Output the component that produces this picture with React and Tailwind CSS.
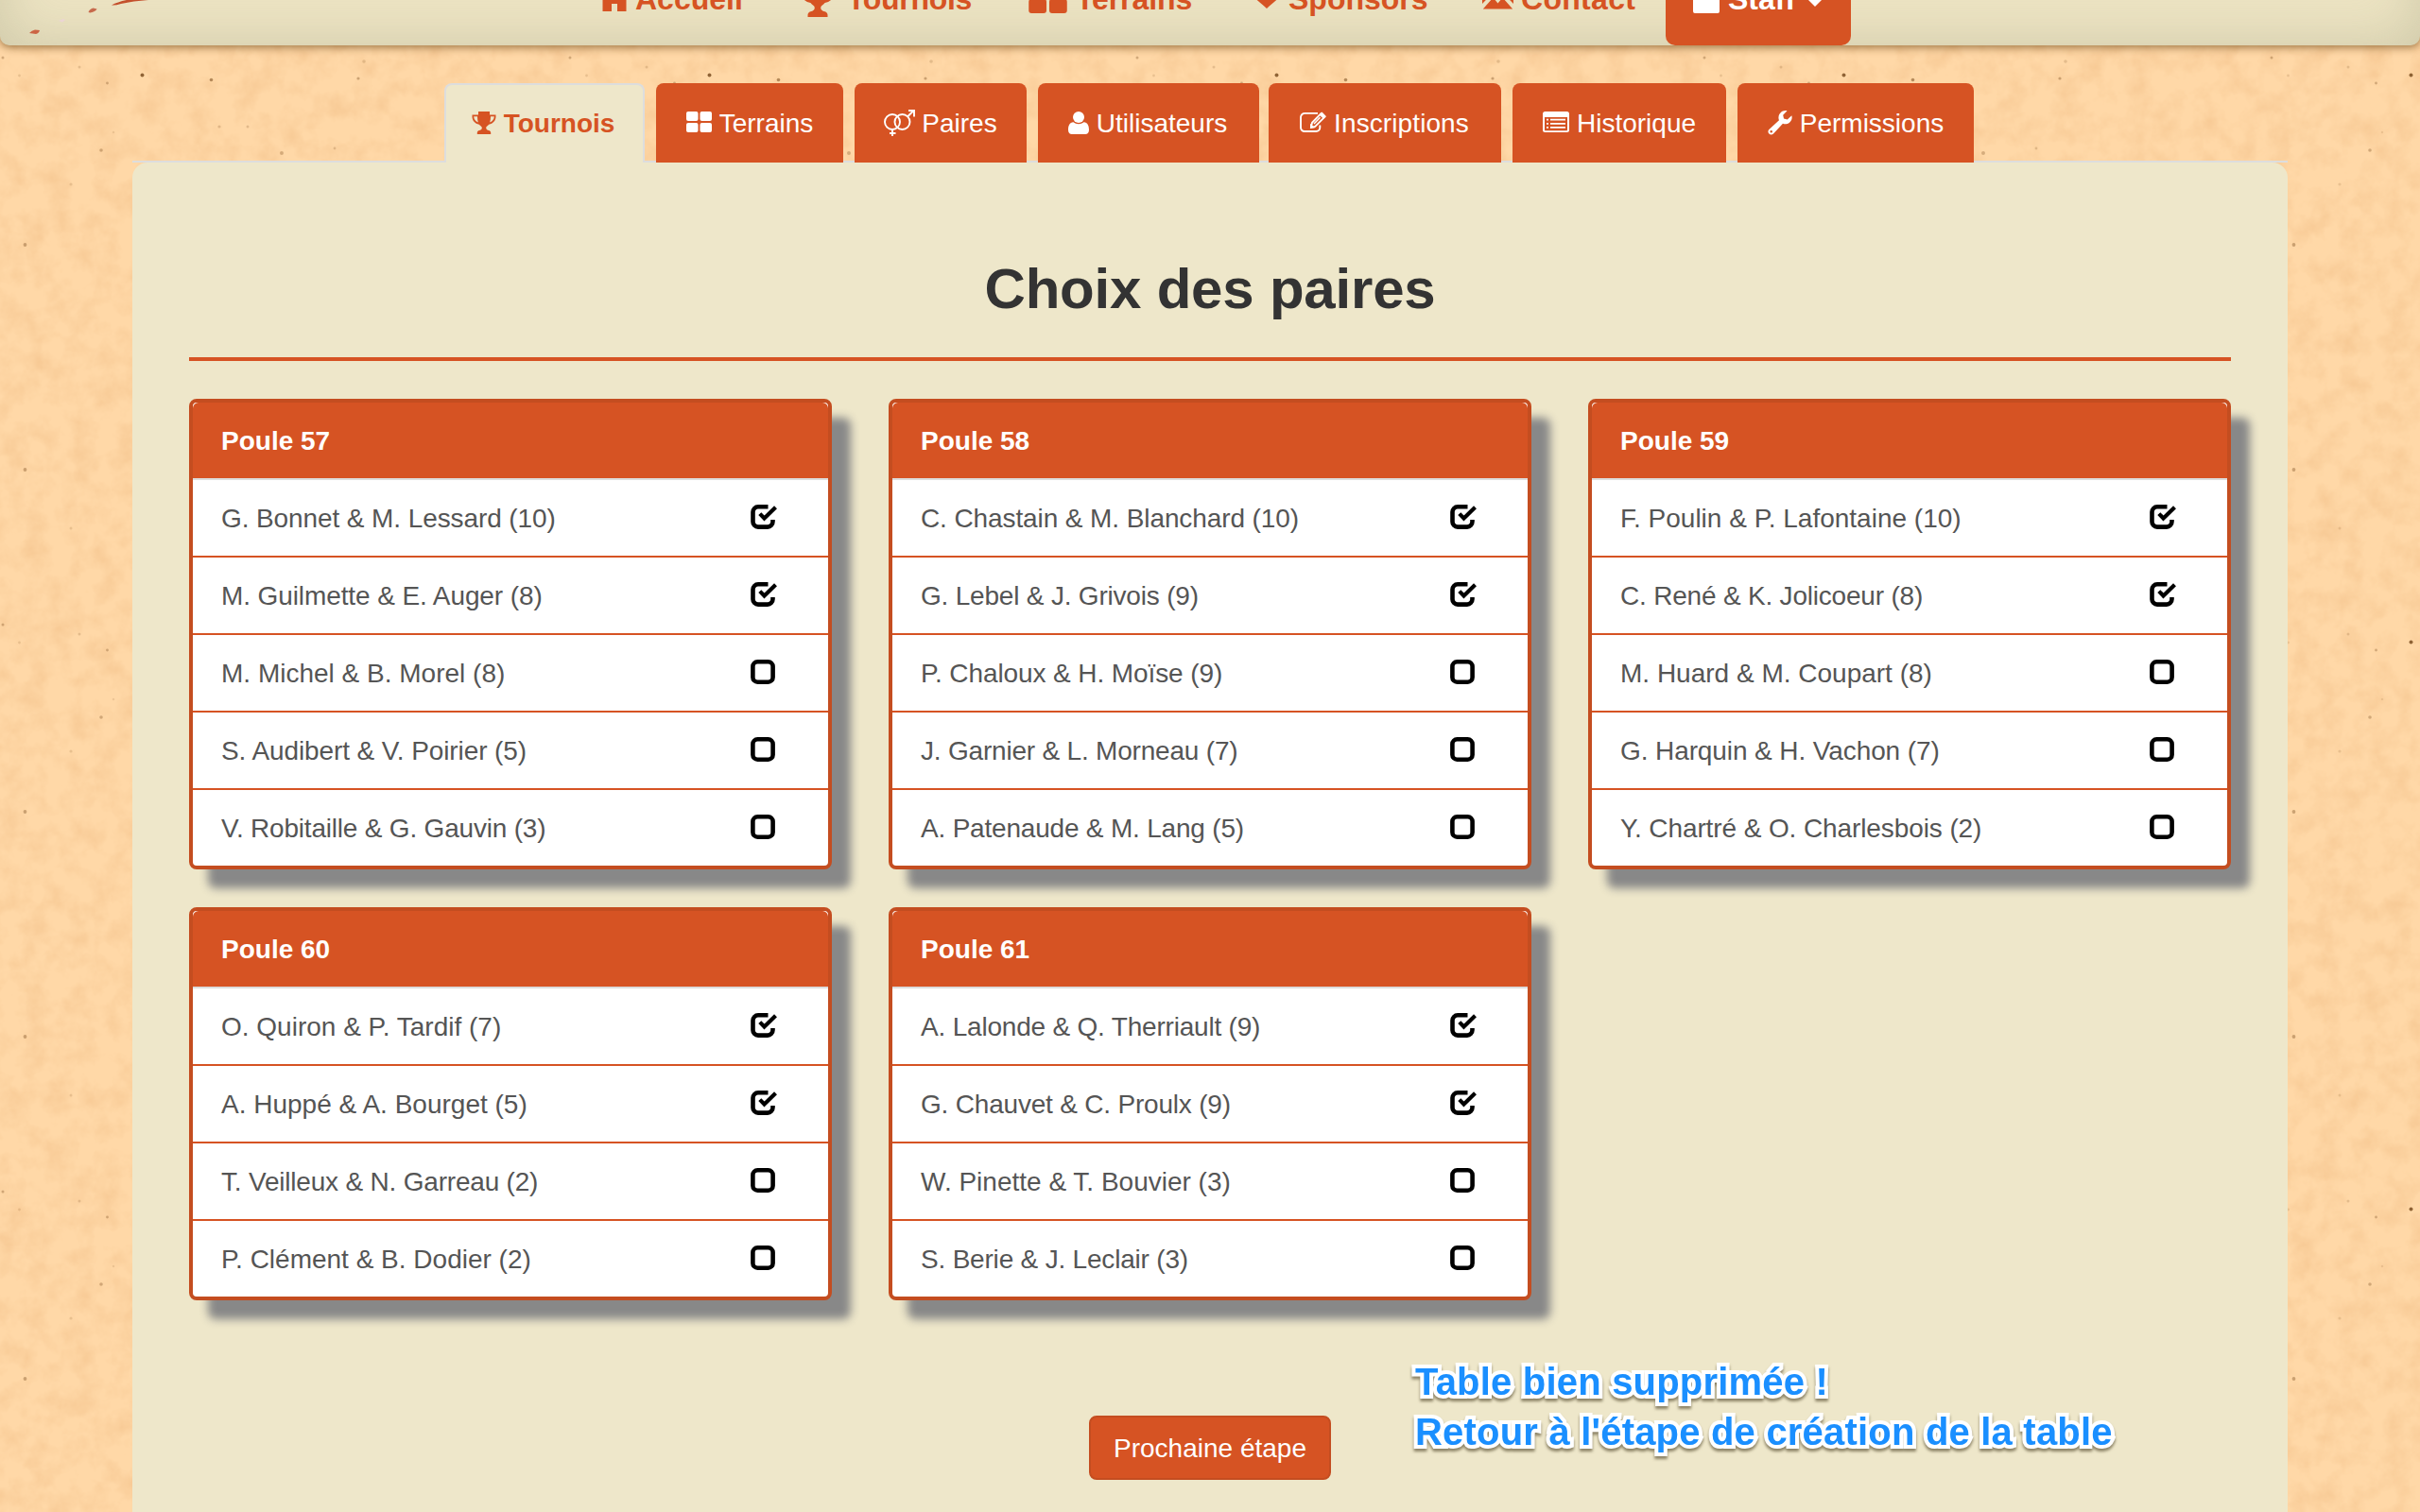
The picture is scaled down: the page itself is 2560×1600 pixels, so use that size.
const T0 = "tracking-normal";
const T1 = "tracking-[-0.1px]";
const T2 = "tracking-[-0.2px]";

const CARDS = [
  { name: "Poule 57", rows: [["G. Bonnet & M. Lessard (10)", true, T1], ["M. Guilmette & E. Auger (8)", true, T1], ["M. Michel & B. Morel (8)", false, T0], ["S. Audibert & V. Poirier (5)", false, T1], ["V. Robitaille & G. Gauvin (3)", false, T2]] },
  { name: "Poule 58", rows: [["C. Chastain & M. Blanchard (10)", true, T1], ["G. Lebel & J. Grivois (9)", true, T2], ["P. Chaloux & H. Moïse (9)", false, T1], ["J. Garnier & L. Morneau (7)", false, T2], ["A. Patenaude & M. Lang (5)", false, T2]] },
  { name: "Poule 59", rows: [["F. Poulin & P. Lafontaine (10)", true, T0], ["C. René & K. Jolicoeur (8)", true, T2], ["M. Huard & M. Coupart (8)", false, T0], ["G. Harquin & H. Vachon (7)", false, T1], ["Y. Chartré & O. Charlesbois (2)", false, T1]] },
  { name: "Poule 60", rows: [["O. Quiron & P. Tardif (7)", true, T0], ["A. Huppé & A. Bourget (5)", true, T0], ["T. Veilleux & N. Garreau (2)", false, T2], ["P. Clément & B. Dodier (2)", false, T0]] },
  { name: "Poule 61", rows: [["A. Lalonde & Q. Therriault (9)", true, T2], ["G. Chauvet & C. Proulx (9)", true, T2], ["W. Pinette & T. Bouvier (3)", false, T0], ["S. Berie & J. Leclair (3)", false, T2]] },
];

const Trophy = ({ className }) => (
  <svg viewBox="0 0 26 24" className={className} fill="currentColor">
    <path d="M7 0h12v3.5h6.5v2c0 4-3 7.500-7.300 8.200-1 1.300-2.300 2-2.700 2.600-.8 1.700.2 3.200 2.700 3.700 1.300.4 2 1.300 2 2.500V24H5.800v-1.500c0-1.200.7-2.100 2-2.500 2.500-.5 3.500-2 2.700-3.700-.4-.6-1.700-1.300-2.700-2.600C3.500 13 .5 9.500.5 5.500v-2H7zM2.200 5.300c0 2.900 1.900 5.300 4.600 6.200C6.200 9.700 6 7.500 6 5.300zm21.600 0H20c0 2.200-.2 4.400-.8 6.200 2.700-.9 4.600-3.300 4.600-6.200z" />
  </svg>
);
const Grid4 = ({ className }) => (
  <svg viewBox="0 0 27 22" className={className} fill="currentColor">
    <rect width="12.500" height="10" rx="2" />
    <rect x="14.500" width="12.500" height="10" rx="2" />
    <rect y="12" width="12.500" height="10" rx="2" />
    <rect x="14.500" y="12" width="12.500" height="10" rx="2" />
  </svg>
);
const Genders = ({ className }) => (
  <svg viewBox="0 0 33 28" className={className} fill="none" stroke="currentColor" strokeWidth="1.900">
    <circle cx="9" cy="13" r="8" />
    <circle cx="19.500" cy="13" r="8" />
    <path d="M9 21v7M6 25h6.500M25 7.500L31 1.500M26 1h6v6.500" />
  </svg>
);
const User = ({ className }) => (
  <svg viewBox="0 0 22 24" className={className} fill="currentColor">
    <circle cx="11" cy="6" r="6" />
    <path d="M5.500 11.200c1.500 1.300 3.400 2 5.500 2s4-.7 5.500-2C20.500 11.200 22 15 22 19.500c0 3-1.700 4.500-4 4.500H4c-2.300 0-4-1.500-4-4.500 0-4.500 1.500-8.300 5.500-8.300z" />
  </svg>
);
const Edit = ({ className }) => (
  <svg viewBox="0 0 28 24" className={className} fill="none" stroke="currentColor">
    <path d="M19 1.900H5.500A4.300 4.300 0 0 0 1 6v11a4 4 0 0 0 4.300 4h12a4 4 0 0 0 4-4v-2.500" strokeWidth="1.900" />
    <path d="M12 16.800l1-5L22.500 2l4 3.600-10.300 10.400z" strokeWidth="1.800" />
    <path d="M20.500 3.500l4.500 4.200L27.800 5 23.500 0.500zM11 17.800v-5l5 4.500z" fill="currentColor" stroke="none" />
    <path d="M15 13l6.500-6.700" strokeWidth="1.500" />
  </svg>
);
const ListAlt = ({ className }) => (
  <svg viewBox="0 0 28 22" className={className} fill="currentColor">
    <path fillRule="evenodd" d="M2.500 0h23A2.500 2.500 0 0 1 28 2.500v17a2.500 2.500 0 0 1-2.500 2.500h-23A2.500 2.500 0 0 1 0 19.500v-17A2.500 2.500 0 0 1 2.500 0zM2 6v13.500q0 .7.700.7h22.600q.7 0 .7-.7V6z" />
    <path d="M4 7.800h2v1.800H4zM8 7.800h16v1.800H8zM4 12h2v1.800H4zM8 12h16v1.800H8zM4 16h2v1.800H4zM8 16h16v1.800H8z" />
  </svg>
);
const Wrench = ({ className }) => (
  <svg viewBox="0 0 26 26" className={className} fill="currentColor">
    <path fillRule="evenodd" d="M20.500.3l-4.300 4.500.8 3.800 3.800.9 4.500-4.300c1.300 4-1.400 8.600-5.800 9-1.300.1-2.500-.1-3.500-.5L6 24.600c-1.300 1.300-3.300 1.300-4.600 0s-1.300-3.300 0-4.600L12 10.200c-.5-1-.7-2.200-.5-3.500C12 2.300 16.300-.9 20.500.3zM3.700 21a1.300 1.300 0 1 0 0 2.600 1.300 1.300 0 0 0 0-2.600z" />
  </svg>
);
const Home = ({ className }) => (
  <svg viewBox="0 0 36 30" className={className} fill="currentColor">
    <path d="M18 0L36 17h-5.500v13h-9.500V22h-6v8h-9.500V17H0z" />
  </svg>
);
const Heart = ({ className }) => (
  <svg viewBox="0 0 32 28" className={className} fill="currentColor">
    <path d="M16 28C10 22 0 16.500 0 8.500 0 3.500 3.500 0 8 0c3.500 0 6.500 2 8 5 1.500-3 4.500-5 8-5 4.500 0 8 3.500 8 8.500C32 16.500 22 22 16 28z" />
  </svg>
);
const Envelope = ({ className }) => (
  <svg viewBox="0 0 33 26" className={className} fill="currentColor">
    <path d="M0 0h33L16.500 15.500zM0 3v17l8.700-9zM33 3v17l-8.700-9zM.8 25.500L11.500 13.500l5 6 5-6 10.700 12z" />
  </svg>
);
const Folder = ({ className }) => (
  <svg viewBox="0 0 28 30" className={className} fill="currentColor">
    <path d="M0 8h28v20a2 2 0 0 1-2 2H2a2 2 0 0 1-2-2zM2 2h9l3 4H2z" />
  </svg>
);

const Check = ({ on }) => (
  <svg viewBox="0 0 28 26" className="mt-[-4px] mr-[24px] h-[26px] w-[28px] shrink-0" fill="none">
    {on ? (
      <>
        <path d="M18.500 2.300H8A5.500 5.500 0 0 0 2.500 8v10A5.500 5.500 0 0 0 8 23.600h10a5.500 5.500 0 0 0 5.500-5.500v-2" stroke="#000" strokeWidth="4.600" />
        <path d="M10.300 10.300l4.200 4.700L26 3" stroke="#fff" strokeWidth="6.500" />
        <path d="M9.800 9.600l4.700 4.900L26.500 2.800" stroke="#000" strokeWidth="4.200" />
      </>
    ) : (
      <rect x="2.400" y="2.300" width="21.200" height="21.400" rx="5" stroke="#000" strokeWidth="4.600" />
    )}
  </svg>
);

const TABS = [
  { label: "Terrains", w: "w-[198px]", Icon: Grid4, ic: "w-[27px] h-[22px] mr-[8px] mt-[-3px]" },
  { label: "Paires", w: "w-[182px]", Icon: Genders, ic: "w-[33px] h-[28px] mr-[7px] mt-[-1px]" },
  { label: "Utilisateurs", w: "w-[234px] pr-[2px]", Icon: User, ic: "w-[22px] h-[24px] mr-[8px] mt-[-1px]" },
  { label: "Inscriptions", w: "w-[246px] -ml-[2px] pr-[1px] tracking-[0.1px]", Icon: Edit, ic: "w-[28px] h-[24px] mr-[8px] mt-[-1px]" },
  { label: "Historique", w: "w-[226px]", Icon: ListAlt, ic: "w-[28px] h-[22px] mr-[8px] mt-[-3px]" },
  { label: "Permissions", w: "w-[250px]", Icon: Wrench, ic: "w-[26px] h-[26px] mr-[8px] mt-[-1px]" },
];

const NAV = [
  { label: "Accueil", w: "w-[214px]", Icon: Home, ic: "mr-[4px] mb-[4px] h-[30px] w-[36px]" },
  { label: "Tournois", w: "w-[242px] tracking-[-0.3px]", Icon: Trophy, ic: "mr-[12px] mt-[2px] h-[35px] w-[38px]" },
  { label: "Terrains", w: "w-[236px] tracking-[-0.1px]", Icon: Grid4, ic: "mr-[9px] mb-[3px] h-[33px] w-[41px]" },
  { label: "Sponsors", w: "w-[244px]", Icon: Heart, ic: "mr-[7px] mb-[8px] h-[28px] w-[32px]" },
  { label: "Contact", w: "w-[194px] tracking-[0.3px]", Icon: Envelope, ic: "mr-[8px] mb-[4px] h-[26px] w-[33px]" },
];

const SPECKS = [
  [3, 61, 1.5, 0.3], [150.5, 79.500, 2, 0.75], [113.5, 88, 1.400, 0.3], [223.5, 84.500, 1.800, 0.5],
  [379, 83, 1.600, 0.35], [385, 65, 1.800, 0.18], [20.500, 80, 1.400, 0.15], [232, 134, 1.600, 0.2],
  [262, 134, 1.500, 0.2], [107, 159, 1.800, 0.3], [298, 162, 2, 0.28], [354, 157, 1.400, 0.2],
  [75, 195, 1.600, 0.15], [26.500, 259, 1.900, 0.35], [26.500, 497, 1.900, 0.35], [75, 559, 1.500, 0.15],
  [84, 71, 1.500, 0.18], [120, 140, 1.300, 0.12],
];

const Paper = () => (
  <svg className="absolute inset-0 h-[1600px] w-[2560px]">
    <defs>
      <filter id="grain" x="0" y="0" width="100%" height="100%" colorInterpolationFilters="sRGB">
        <feTurbulence type="fractalNoise" baseFrequency="0.04" numOctaves="4" seed="4" />
        <feColorMatrix values="0 0 0 0 0.92  0 0 0 0 0.70  0 0 0 0 0.47  0.700 0 0 0 -0.270" />
      </filter>
      <pattern id="specks" width="600" height="600" patternUnits="userSpaceOnUse">
        {SPECKS.map(([x, y, r, o], i) => (
          <circle key={i} cx={x} cy={y} r={r} fill="#6b3d10" opacity={o} />
        ))}
      </pattern>
    </defs>
    <rect width="2560" height="1600" filter="url(#grain)" />
    <rect width="2560" height="1600" fill="url(#specks)" />
  </svg>
);

const Card = ({ card }) => (
  <section className="w-[680px] self-start overflow-hidden rounded-[8px] border-4 border-[#c44d20] bg-white shadow-[20px_20px_10px_#888]">
    <h3 className="flex h-[82px] items-center rounded-t-[6px] border-b-2 border-[#ddd] bg-[#d65323] px-[30px] pt-[2px] text-[28px] font-bold text-white">{card.name}</h3>
    <ul className="divide-y-2 divide-[#d65323]">
      {card.rows.map(([names, on, tracking]) => (
        <li key={names} className="flex h-[82px] items-center justify-between px-[30px] pt-[2px] text-[28px] text-[#555] last:h-[80px]">
          <span className={tracking}>{names}</span>
          <Check on={on} />
        </li>
      ))}
    </ul>
  </section>
);

export default function App() {
  return (
    <div className="relative h-[1600px] w-[2560px] overflow-hidden bg-[#ffd8a7] font-['Liberation_Sans',Arial,sans-serif]">
      <Paper />
      <div className="relative flex flex-col items-center">
        <header className="-mt-[100px] flex h-[148px] w-full items-end rounded-b-[10px] bg-[#ede4c3] pl-[632px] text-[32px] font-bold text-[#d65323] shadow-[inset_0_0_60px_rgba(150,150,120,0.36),0_2px_10px_rgba(100,60,10,0.65)]">
          {NAV.map(({ label, w, Icon, ic }) => (
            <a key={label} className={`flex h-[98px] items-center ${w}`}><Icon className={ic} />{label}</a>
          ))}
          <a className="flex h-[98px] w-[196px] items-center rounded-b-[10px] bg-[#d65323] pl-[29px] text-white">
            <Folder className="mr-[9px] h-[30px] w-[28px]" />Staff
            <svg viewBox="0 0 18 9" className="mt-[6px] ml-[12px] h-[9px] w-[18px]" fill="currentColor"><path d="M0 0h18L9 9z" /></svg>
          </a>
        </header>
        <svg viewBox="0 0 160 40" className="absolute top-0 left-0 h-[40px] w-[160px]">
          <path d="M118 5.500Q124 2 134 0H157Q141 1 128 4Q122 6 118 5.500z" fill="#c4502c" />
          <path d="M93.500 13q1-3.500 5-4.500l4 1q-1 2.500-7 4z" fill="#c76a4c" />
          <path d="M62 22l5-2 2 1-3 2.500z" fill="#ecd5d4" />
          <path d="M31 35q2.500-3 6-3.500l5 .5q-1 3.500-4 4z" fill="#cc6444" />
        </svg>
        <nav className="mt-[40px] mr-[2px] flex h-[84px] gap-[12px] text-[28px] text-white">
          <a className="flex w-[212px] items-center justify-center rounded-t-[8px] border-2 border-b-0 border-[#ddd] bg-[#eee7ca] pr-[3px] font-bold text-[#d65323]"><Trophy className="mt-[-2px] mr-[8px] h-[24px] w-[26px]" />Tournois</a>
          {TABS.map(({ label, w, Icon, ic }) => (
            <a key={label} className={`z-10 flex items-center justify-center rounded-t-[8px] bg-[#d65323] pt-[1px] ${w}`}><Icon className={ic} />{label}</a>
          ))}
        </nav>
        <div className="-mt-[2px] flex h-[2px] w-[2280px]">
          <div className="w-[330px] bg-[#ddd]" />
          <div className="w-[212px]" />
          <div className="grow bg-[#ddd]" />
        </div>
        <main className="flex h-[1500px] w-[2280px] flex-col items-center rounded-t-[16px] bg-[#eee7ca] px-[60px]">
          <h1 className="mb-[40px] flex h-[210px] w-full items-center justify-center border-b-4 border-[#d65323] pt-[62px] text-[60px] font-bold tracking-[-0.2px] text-[#333]">Choix des paires</h1>
          <div className="grid w-full grid-cols-3 gap-x-[60px] gap-y-[40px]">{CARDS.map((c) => <Card key={c.name} card={c} />)}</div>
          <button className="mt-[122px] h-[68px] w-[256px] rounded-[8px] border-2 border-[#c44d20] bg-[#d65323] pt-[1px] text-[28px] text-white">Prochaine étape</button>
        </main>
      </div>
      <p className="absolute top-[1436px] left-[1497px] text-[40px] leading-[53px] font-bold tracking-[0.2px] whitespace-nowrap text-[#1a8fff] drop-shadow-[0_3px_1.5px_rgba(60,50,20,0.55)] [paint-order:stroke_fill] [-webkit-text-stroke:8px_#fff]">
        Table bien supprimée !<br />Retour à l'étape de création de la table
      </p>
    </div>
  );
}
